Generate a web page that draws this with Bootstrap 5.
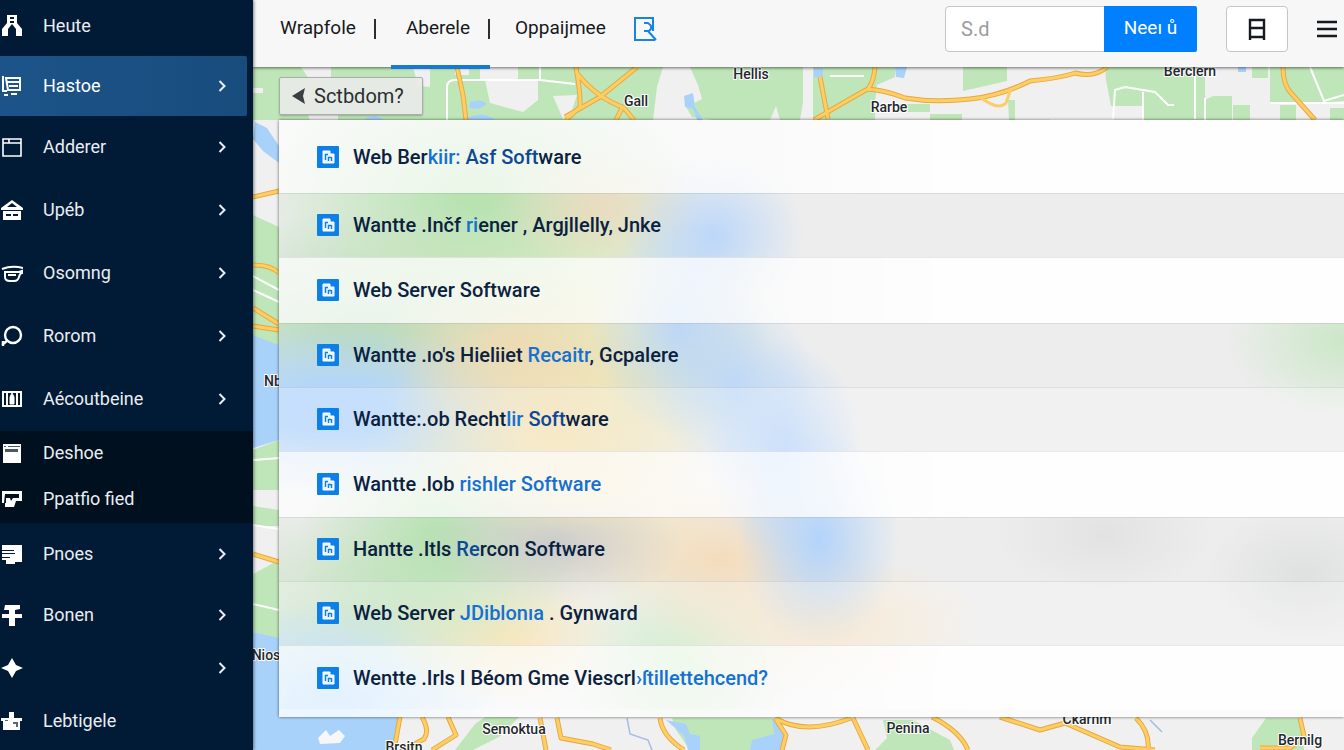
<!DOCTYPE html>
<html lang="en">
<head>
<meta charset="utf-8">
<meta name="viewport" content="width=device-width, initial-scale=1">
<title>Web Server Software</title>
<link href="https://cdn.jsdelivr.net/npm/bootstrap@5.3.0/dist/css/bootstrap.min.css" rel="stylesheet">
<style>
  body { font-family: Roboto, "Liberation Sans", sans-serif; color: #0b2140; background: #f1f0f1; }
  a { color: inherit; text-decoration: none; }
  .shell { height: 100vh; overflow: hidden; }

  /* Sidebar */
  .side { width: 253px; background: #011a36; color: #e9eef3; font-size: 18px; overflow: hidden; z-index: 4; box-shadow: 1px 0 3px rgba(0,0,0,.45); }
  .side a { height: 63px; padding: 0 24px 2px 1px; flex-shrink: 0; }
  .side a.h-first { height: 56px; padding-bottom: 5px; }
  .side a.h-mid { height: 60px; padding-bottom: 3px; }
  .side a.h-low, .side-sub a { height: 46px; padding-bottom: 3px; }
  .side a.current { background: linear-gradient(90deg, #1c5489, #184c7d); margin-right: 6px; padding-right: 18px; padding-bottom: 1px; border-radius: 0 2px 2px 0; color: #fff; }
  .side-sub { background: #00101f; }
  .side svg.glyph { width: 22px; height: 22px; margin-right: 20px; flex-shrink: 0; }
  .side svg.chev { width: 14px; height: 14px; margin-left: auto; }

  /* Top bar */
  .topbar { height: 67px; background: #f7f7f7; padding: 0 7px 10px 27px; z-index: 3; box-shadow: 0 1px 3px rgba(0,0,0,.55); color: #16191d; }
  .tabs { font-size: 19px; }
  .tabs a { height: 57px; }
  .tabs a.sep::after { content: ""; width: 2px; height: 20px; margin-left: 18px; background: #2b2e31; }
  .tabs a.active { position: relative; padding-left: 15px; margin-left: 15px; margin-right: 25px; }
  .tabs a.active::before { content: ""; position: absolute; left: 0; right: 0; bottom: -12px; height: 4px; background: #1878d6; }
  .finder { width: 252px; height: 46px; }
  .finder .form-control { border-color: #c4c6c9; border-radius: 4px; font-size: 20px; padding-left: 15px; }
  .finder .form-control::placeholder { color: #9a9da1; }
  .finder .btn { width: 93px; background: #007fff; color: #fff; border: 0; border-radius: 2px; font-size: 19px; padding: 0; }
  .boxbtn { width: 62px; height: 46px; background: #fff; border: 1px solid #c4c6c9; border-radius: 4px; margin-left: 29px; }
  .menubtn { width: 20px; height: 20px; margin-left: 29px; border: 0; background: none; }

  /* Map */
  .mapart { position: absolute; inset: 0; width: 100%; height: 100%; }
  .mapart text { font-size: 14px; font-weight: 500; fill: #23282d; stroke: #fff; stroke-width: 2px; paint-order: stroke; text-anchor: middle; }
  .content { padding: 10px 0 0 26px; }
  .backbtn { width: 144px; height: 38px; background: rgba(232,235,231,.94); border: 1px solid #a9aeaa; border-radius: 2px; font-size: 20px; color: #2a2f33; padding: 0 12px; box-shadow: 0 1px 2px rgba(0,0,0,.25); }

  /* Results over frosted map */
  .results {
    margin-top: 5px; font-size: 20px; font-weight: 500; border-radius: 0;
    box-shadow: 0 0 3px rgba(0,0,0,.6);
    padding-bottom: 8px;
    background:
      linear-gradient(rgba(255,255,255,.8), rgba(255,255,255,.8)) left bottom / 100% 8px no-repeat,
      radial-gradient(ellipse 90px 80px at 435px 115px, rgba(183,213,251,.9), rgba(183,213,251,0)),
      radial-gradient(ellipse 90px 110px at 400px 205px, rgba(183,213,251,.9), rgba(183,213,251,0)),
      radial-gradient(ellipse 80px 100px at 455px 265px, rgba(183,213,251,.8), rgba(183,213,251,0)),
      radial-gradient(ellipse 80px 110px at 505px 330px, rgba(183,213,251,.95), rgba(183,213,251,0)),
      radial-gradient(ellipse 80px 110px at 540px 420px, rgba(178,212,252,1), rgba(178,212,252,0)),
      radial-gradient(ellipse 110px 60px at 320px 85px, rgba(240,217,188,.8), rgba(240,217,188,0)),
      radial-gradient(ellipse 230px 140px at 200px 75px, #b8e3b1 10%, rgba(184,227,177,0)),
      radial-gradient(ellipse 130px 80px at 230px 225px, rgba(243,217,178,.8), rgba(243,217,178,0)),
      radial-gradient(ellipse 170px 110px at 275px 305px, #f4e1b2, rgba(244,225,178,0)),
      radial-gradient(ellipse 220px 90px at 50px 290px, #b2d5fb 25%, rgba(178,213,251,0)),
      radial-gradient(ellipse 260px 120px at 90px 210px, #bcdcba 15%, rgba(188,220,186,0)),
      radial-gradient(ellipse 240px 120px at 270px 190px, #f1ecb8, rgba(241,236,184,0)),
      radial-gradient(ellipse 160px 100px at 350px 250px, rgba(220,230,190,.9), rgba(220,230,190,0)),
      radial-gradient(ellipse 130px 60px at 275px 425px, #cbcccc, rgba(203,204,204,0)),
      radial-gradient(ellipse 140px 140px at 160px 420px, #b9e2b4 10%, rgba(185,226,180,0)),
      radial-gradient(ellipse 120px 70px at 225px 515px, #fbdfa6, rgba(251,223,166,0)),
      radial-gradient(ellipse 180px 110px at 290px 375px, #f5e6bc, rgba(245,230,188,0)),
      radial-gradient(ellipse 160px 80px at 440px 440px, #f4dcbc, rgba(244,220,188,0)),
      radial-gradient(ellipse 170px 70px at 540px 505px, #f6e2c4, rgba(246,226,196,0)),
      radial-gradient(ellipse 120px 110px at 400px 545px, #c2e8bd, rgba(194,232,189,0)),
      radial-gradient(ellipse 180px 110px at 50px 590px, #9fd2ff 15%, rgba(159,210,255,0)),
      radial-gradient(ellipse 240px 110px at 90px 490px, #c8e2c4, rgba(200,226,196,0)),
      radial-gradient(ellipse 120px 80px at 100% 220px, #cbe7c7, rgba(203,231,199,0)),
      radial-gradient(ellipse 110px 60px at 825px 415px, #e2e2e2, rgba(226,226,226,0)),
      radial-gradient(ellipse 100px 70px at 1025px 455px, #dfe0e0, rgba(223,224,224,0)),
      #ededed;
  }
  .results a { height: 64px; padding: 0 38px 2px; border-top: 1px solid rgba(120,125,130,.16); color: #0b2140; }
  .results a.lit { height: 66px; background: linear-gradient(90deg, rgba(255,255,255,.72) 45%, rgba(255,255,255,.96) 65%); }
  .results a.tint { background: rgba(255,255,255,.25); }
  .results a.lit:first-child { height: 73px; border-top: 0; padding-bottom: 0; }
  .results a.lit:last-child { height: 64px; padding-bottom: 0; }
  .results svg { width: 22px; height: 22px; margin-right: 14px; flex-shrink: 0; }
  .results .text-nowrap { white-space: pre !important; }
  .hit { color: #1470d2; }
  .deep { color: #0d4796; }
</style>
<script src="https://cdn.jsdelivr.net/npm/bootstrap@5.3.0/dist/js/bootstrap.bundle.min.js"></script>
</head>
<body>
<svg class="d-none">
  <symbol id="chev" viewBox="0 0 14 14"><path d="M4.500 2l5 5-5 5" fill="none" stroke="#e9eef3" stroke-width="2"/></symbol>
  <symbol id="doc" viewBox="0 0 22 22"><rect width="22" height="22" rx="1" fill="#0d80e8"/><path d="M6 17V5h7v3h4v9z" fill="#e9f5ff" stroke="#fff"/><path d="M8.500 8v6M8 8.500h3M11.500 11v4M14.500 11v4M11 11.500h3" stroke="#0d80e8" stroke-width="1.400"/></symbol>
</svg>

<div class="shell d-flex">
  <nav class="side d-flex flex-column flex-shrink-0" aria-label="Main">
    <a href="#" class="d-flex align-items-center h-first"><svg class="glyph" viewBox="0 0 22 22" fill="#fff"><path d="M6 0h10v8l5 6v7h-6v-7l-4-5-4 5v7H1v-7l5-6z"/><path d="M9 2h4v2H9zM9 6h4v2H9z" fill="#011a36"/></svg>Heute</a>
    <a href="#" class="d-flex align-items-center h-mid current" aria-current="page"><svg class="glyph" viewBox="0 0 22 22" fill="none" stroke="#fff" stroke-width="2"><path d="M2 1v15h4M5 3h14v12H7zM5 7h14M8 11h9M3 20h4M10 19h6"/></svg>Hastoe<svg class="chev"><use href="#chev"/></svg></a>
    <a href="#" class="d-flex align-items-center"><svg class="glyph" viewBox="0 0 22 22" fill="none" stroke="#fff" stroke-width="1.600"><path d="M2 3h18v17H2zM2 7h18M8 3v4"/></svg>Adderer<svg class="chev"><use href="#chev"/></svg></a>
    <a href="#" class="d-flex align-items-center"><svg class="glyph" viewBox="0 0 22 22"><path d="M11 1l11 8v2H0V9zM2 12h18v9H2z" fill="#fff"/><path d="M6 8l5-4 5 4zM5 15h5v2H5zM12 15h5v2h-5z" fill="#011a36"/></svg>Upéb<svg class="chev"><use href="#chev"/></svg></a>
    <a href="#" class="d-flex align-items-center"><svg class="glyph" viewBox="0 0 22 22" fill="none" stroke="#fff" stroke-width="2"><path d="M1 7q10-4 21-1M4 10h14l3-1v2q-2 0-3 4-1 4-5 4H9q-5 0-5-4zM7 13h8"/></svg>Osomng<svg class="chev"><use href="#chev"/></svg></a>
    <a href="#" class="d-flex align-items-center"><svg class="glyph" viewBox="0 0 22 22" fill="none" stroke="#fff" stroke-width="2.400"><circle cx="12" cy="10" r="8"/><path d="M1 20l6-5M2 16v5"/></svg>Rorom<svg class="chev"><use href="#chev"/></svg></a>
    <a href="#" class="d-flex align-items-center"><svg class="glyph" viewBox="0 0 22 22" fill="none" stroke="#fff" stroke-width="2"><path d="M2 4h18v14H2zM6 4v14M16 4v14"/><path d="M9 16V9l2-4 2 4v7z" fill="#fff" stroke-width="1"/></svg>Aécoutbeine<svg class="chev"><use href="#chev"/></svg></a>
    <div class="side-sub">
      <a href="#" class="d-flex align-items-center"><svg class="glyph" viewBox="0 0 22 22"><path d="M2 2h18v19H2z" fill="#fff"/><path d="M3 4h2v1H3zM7 4h12v1H7zM4 7h13v3H4z" fill="#4b5865"/></svg>Deshoe</a>
      <a href="#" class="d-flex align-items-center"><svg class="glyph" viewBox="0 0 22 22"><path d="M1 3h20v10h-6l-2 6H4v-4H1z" fill="#fff"/><path d="M4 6h14v4h-6l-2 3-1-3H5v5H3z" fill="#00101f"/></svg>Ppatfio fied</a>
    </div>
    <a href="#" class="d-flex align-items-center"><svg class="glyph" viewBox="0 0 22 22"><path d="M1 2h20v17h-7v2H5v-4H1z" fill="#fff"/><path d="M1 7h12v1H1zM1 10h13v1H1zM1 14h8v1H1z" fill="#011a36"/></svg>Pnoes<svg class="chev"><use href="#chev"/></svg></a>
    <a href="#" class="d-flex align-items-center h-mid"><svg class="glyph" viewBox="0 0 22 22"><path d="M4 1h15v4l-5 1v4h7v4h-7v8H8v-8H1v-4h7V6H3z" fill="#fff"/></svg>Bonen<svg class="chev"><use href="#chev"/></svg></a>
    <a href="#" class="d-flex align-items-center h-low" aria-label="Favourites"><svg class="glyph" viewBox="0 0 22 22"><path d="M11 1l4 7 7 3-7 3-4 7-4-7-7-3 7-3z" fill="#fff"/></svg><svg class="chev"><use href="#chev"/></svg></a>
    <a href="#" class="d-flex align-items-center h-mid"><svg class="glyph" viewBox="0 0 22 22"><path d="M8 2h5v6h8v3h-2v9H2v-9H0V8h8z" fill="#fff"/><path d="M12 12h5v5h-2v-3h-3zM4 10h3v1H4z" fill="#54677b"/></svg>Lebtigele</a>
  </nav>

  <div class="d-flex flex-column flex-grow-1 position-relative">
    <header class="topbar d-flex align-items-center position-relative">
      <nav class="tabs d-flex" aria-label="Sections">
        <a href="#" class="d-flex align-items-center sep">Wrapfole</a>
        <a href="#" class="d-flex align-items-center sep active">Aberele</a>
        <a href="#" class="d-flex align-items-center">Oppaijmee</a>
      </nav>
      <svg class="ms-4" width="28" height="28" viewBox="0 0 28 28" fill="none" stroke="#1584e6" stroke-width="2" aria-hidden="true"><path d="M25 25H5V3h18v13"/><path d="M14 8h4q6 4 1 8h-5M18 16l8 9"/></svg>
      <form class="finder input-group flex-nowrap ms-auto">
        <input class="form-control" type="text" placeholder="S.d" aria-label="Search">
        <button class="btn" type="button">Neeı ů</button>
      </form>
      <button class="boxbtn d-flex align-items-center justify-content-center" type="button" aria-label="Layout"><svg width="20" height="22" viewBox="0 0 20 22" fill="none" stroke="#16191d" stroke-width="2.400"><path d="M3 22V2h14v20M3 10h14M3 19h14"/></svg></button>
      <button class="menubtn p-0 d-flex" type="button" aria-label="Menu"><svg width="20" height="20" viewBox="0 0 20 20" stroke="#16191d" stroke-width="2.400"><path d="M0 3h20M0 10h20M0 17h20"/></svg></button>
    </header>

    <main class="position-relative flex-grow-1">
      <svg class="mapart" viewBox="253 67 1091 683" preserveAspectRatio="xMinYMin slice" aria-label="Map">
        <rect x="253" y="67" width="1091" height="683" fill="#f1f0f1"/>
        <g fill="#bfe6b8">
          <path d="M253 67h410l-6 20-4 33H253zM690 67h113v35l-3 18h-20l-4-14-6 14h-58l-20-3-6-10 16-8-4-14z"/>
          <path d="M813 67h82v10l-18 8-4 35h-60zM898 104h32v8h-30zM855 110h20v10h-22zM963 67h44v14l-44 10zM1008 100h7v20h-6zM930 114h32v6h-32z"/>
          <path d="M1105 67h100v53h-62V106h-32l-5-26zM1205 100l8-4h19v24h-27zM1233 105h17v15h-17zM1252 67h16v11h-16zM1270 67h74v34l-40 3-34-2zM1280 105h16v15h-16zM1330 108h14v12h-14z"/>
          <path d="M253 215l26 12v118l-26-4zM253 450l26-10v50h-26zM253 506l26 4v16h-26zM279 560v80l-26-8v-58z"/>
          <path d="M455 750l20-26 10-7h34l-20 20-26 13zM672 718h100l8 14-4 18h-86l-14-20zM875 750l12-12-4-18h30l37 20 4 10zM1252 738l14-20h34l4 32h-52z"/>
        </g>
        <g fill="#f1f0f1">
          <path d="M301 67h30v12h-22zM413 67h17v20l-12-1zM480 67h38v13h-38zM485 80h53v20l-15 12-33-9zM553 96l24-1-8 24h-6zM661 104h14v12h-18zM308 115h30v6h-28zM253 88h10v5h-10zM455 67h14v8h-14z"/>
        </g>
        <g fill="#a9d2fb">
          <path d="M255 122l12 6 12 18v17l-16-12-10-12zM253 335l26 10v95l-26 8zM253 632l26 6v79h121l-8 33H253z"/>
          <path d="M364 120q10-8 20 0zM470 102q12-4 17 2l-8 5-10-1zM468 118q14-8 28 2h-28zM684 96l9-3 2 14 8 13h-6l-4-11-8-2zM814 68h9v9h-9zM895 67h12l-3 11-8-1zM1238 67h8v5h-8z"/>
          <path d="M666 720l20 4 4 10 10 2v14h-12l-4-14zM772 718l12 16v16h-34l2-10 22-6z"/>
        </g>
        <path d="M318 738l8-8 4 6 9-6 6 6-5 7-20 1z" fill="#f5f7f9"/>
        <g fill="none" stroke="#fff" stroke-width="2">
          <path d="M447 120V87q0-7 8-7h85V67M540 80l35 4M1113 120l2-30 10-3 30 5 13 13h6M1143 92v28M1195 67v52M1310 67l14 34 20-6M1270 103h74M1205 120V98M253 276l26 14M253 290l26 12M253 460l26-2M253 525l26 4M253 604l26 6M830 76h34M1050 120h64"/>
        </g>
        <path d="M627 718l3 16 18 6 4 10M1150 720l12 12" fill="none" stroke="#a5bde2" stroke-width="1.500"/>
        <g fill="none" stroke="#eaa93e" stroke-width="5" stroke-linejoin="round">
          <path d="M457 67l6 28 3 25M576 67q5 30 4 40l-14 13M576 72q20 26 49 36M637 67l-37 30-35 20M622 108l-6 12M624 108l10 12M820 77l8 42M814 120q44-26 54-31 6-8 7-22M868 89q20 2 37 9 30 5 65 1 30-3 60-18 30-3 45-8 20 5 32-6M1283 67q0 18 8 26l24 27M253 197l26-6M253 265q18 0 26 8M253 308l26 16M253 326l26 4M253 554l26 8M400 717l-6 33M422 717q8 14 2 22l-20 11M448 717l8 18-24 15M557 718l4 20 32 6 18 6M540 718l6 32M660 718q2 18 24 32M775 718l11 17-4 15M775 718q30 18 76 0M853 718l15 32M932 717q28 14 36 33M1000 717l40 13 25-7 55 24 35 3M1136 718q14 14 12 32M1300 718l4 18-14 12h-30"/>
        </g>
        <g fill="none" stroke="#fbcf66" stroke-width="3">
          <path d="M457 67l6 28 3 25M576 67q5 30 4 40l-14 13M576 72q20 26 49 36M637 67l-37 30-35 20M622 108l-6 12M624 108l10 12M820 77l8 42M814 120q44-26 54-31 6-8 7-22M868 89q20 2 37 9 30 5 65 1 30-3 60-18 30-3 45-8 20 5 32-6M1283 67q0 18 8 26l24 27M253 197l26-6M253 265q18 0 26 8M253 308l26 16M253 326l26 4M253 554l26 8M400 717l-6 33M422 717q8 14 2 22l-20 11M448 717l8 18-24 15M557 718l4 20 32 6 18 6M540 718l6 32M660 718q2 18 24 32M775 718l11 17-4 15M775 718q30 18 76 0M853 718l15 32M932 717q28 14 36 33M1000 717l40 13 25-7 55 24 35 3M1136 718q14 14 12 32M1300 718l4 18-14 12h-30M980 97q18 14 26 6l5-14"/>
        </g>
        <text x="751" y="79">Hellis</text>
        <text x="636" y="106">Gall</text>
        <text x="889" y="112">Rarbe</text>
        <text x="1190" y="76">Berclern</text>
        <text x="273" y="386">Nb</text>
        <text x="266" y="660">Nios</text>
        <text x="514" y="734">Semoktua</text>
        <text x="404" y="752">Brsitn</text>
        <text x="908" y="733">Penina</text>
        <text x="1087" y="724">Ckarnm</text>
        <text x="1300" y="745">Bernilg</text>
      </svg>

      <div class="content position-relative">
        <button class="backbtn d-flex align-items-center" type="button"><svg width="14" height="16" viewBox="0 0 14 16" class="me-2 flex-shrink-0"><path d="M0 8l13-8-2 8 2 8z" fill="#3a3f42"/></svg>Sctbdom?</button>
        <div class="results d-flex flex-column">
          <a href="#" class="lit d-flex align-items-center"><svg><use href="#doc"/></svg><span class="text-nowrap">Web Ber<span class="hit">kiir:</span> <span class="deep">Asf Soft</span>ware</span></a>
          <a href="#" class="d-flex align-items-center"><svg><use href="#doc"/></svg><span class="text-nowrap">Wantte .Inčf <span class="hit">ri</span>ener , Argjllelly, Jnke</span></a>
          <a href="#" class="lit d-flex align-items-center"><svg><use href="#doc"/></svg><span class="text-nowrap">Web Server Software</span></a>
          <a href="#" class="d-flex align-items-center"><svg><use href="#doc"/></svg><span class="text-nowrap">Wantte .ıo's Hieliiet <span class="hit">Recaitr</span>, Gcpalere</span></a>
          <a href="#" class="tint d-flex align-items-center"><svg><use href="#doc"/></svg><span class="text-nowrap">Wantte:.ob Recht<span class="hit">lir</span> <span class="deep">Soft</span>ware</span></a>
          <a href="#" class="lit d-flex align-items-center"><svg><use href="#doc"/></svg><span class="text-nowrap">Wantte .lob <span class="hit">rishler Software</span></span></a>
          <a href="#" class="d-flex align-items-center"><svg><use href="#doc"/></svg><span class="text-nowrap">Hantte .Itls <span class="deep">Re</span>rcon Software</span></a>
          <a href="#" class="tint d-flex align-items-center"><svg><use href="#doc"/></svg><span class="text-nowrap">Web Server <span class="hit">JDiblonıa</span> . Gynward</span></a>
          <a href="#" class="lit d-flex align-items-center"><svg><use href="#doc"/></svg><span class="text-nowrap">Wentte .Irls I Béom Gme Viescrl<span class="hit">›ſtillettehcend?</span></span></a>
        </div>
      </div>
    </main>
  </div>
</div>
</body>
</html>
